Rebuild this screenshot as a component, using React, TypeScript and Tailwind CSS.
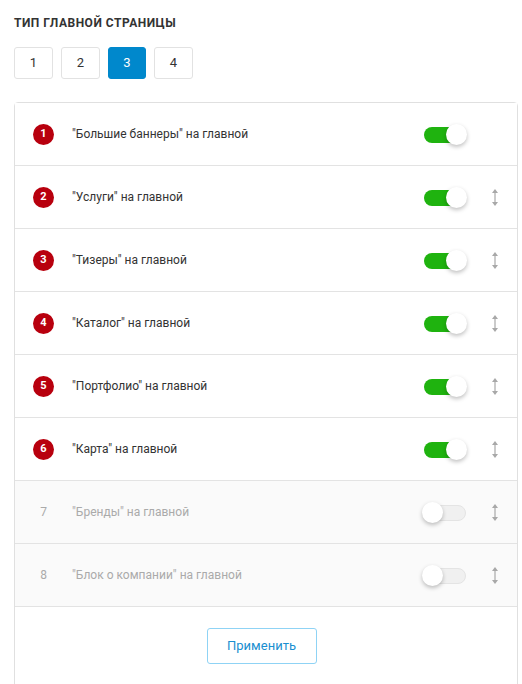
import { useState } from "react";

type Block = { id: number; title: string; on: boolean; drag: boolean };

const initialBlocks: Block[] = [
  { id: 1, title: "\"Большие баннеры\" на главной", on: true, drag: false },
  { id: 2, title: "\"Услуги\" на главной", on: true, drag: true },
  { id: 3, title: "\"Тизеры\" на главной", on: true, drag: true },
  { id: 4, title: "\"Каталог\" на главной", on: true, drag: true },
  { id: 5, title: "\"Портфолио\" на главной", on: true, drag: true },
  { id: 6, title: "\"Карта\" на главной", on: true, drag: true },
  { id: 7, title: "\"Бренды\" на главной", on: false, drag: true },
  { id: 8, title: "\"Блок о компании\" на главной", on: false, drag: true },
];

function Toggle({ on, onClick }: { on: boolean; onClick: () => void }) {
  return (
    <button type="button" onClick={onClick} className="relative h-[21px] w-[45px] shrink-0">
      <span
        className={
          on
            ? "absolute left-[2px] top-[3px] h-[16px] w-[40px] rounded-full bg-[#1fb30f]"
            : "absolute left-[4px] top-[3px] h-[16px] w-[40px] rounded-full border border-[#e4e4e4] bg-[#f0f0f0]"
        }
      />
      <span
        className={
          on
            ? "absolute right-0 top-0 h-[21px] w-[21px] rounded-full bg-white shadow-[0_2px_4px_rgba(0,0,0,0.25)]"
            : "absolute left-0 top-0 h-[21px] w-[21px] rounded-full bg-white shadow-[0_2px_4px_rgba(0,0,0,0.25)]"
        }
      />
    </button>
  );
}

function DragIcon() {
  return (
    <svg width="8" height="19" viewBox="0 0 8 19" className="shrink-0">
      <path d="M4 3v13" stroke="#a8a8a8" strokeWidth="1.2" />
      <path d="M1 5l3-4 3 4z" fill="#a8a8a8" />
      <path d="M1 14l3 4 3-4z" fill="#a8a8a8" />
    </svg>
  );
}

export default function App() {
  const [type, setType] = useState(3);
  const [blocks, setBlocks] = useState(initialBlocks);

  const toggle = (id: number) =>
    setBlocks((prev) => prev.map((b) => (b.id === id ? { ...b, on: !b.on } : b)));

  return (
    <div className="h-[684px] overflow-hidden bg-white pl-[14px] pr-[4px] pt-[15px] font-['Roboto',sans-serif]">
      <h2 className="text-[12px] font-bold uppercase leading-[16px] tracking-[0.5px] text-[#333]">
        Тип главной страницы
      </h2>

      <div className="mt-[16px] flex gap-[8px]">
        {[1, 2, 3, 4].map((n) => (
          <button
            key={n}
            type="button"
            onClick={() => setType(n)}
            className={
              n === type
                ? "h-[32px] w-[38px] rounded-[3px] border border-[#0088cc] bg-[#0088cc] text-[13px] text-white"
                : "h-[32px] w-[39px] rounded-[3px] border border-[#e2e2e2] bg-white text-[13px] text-[#333]"
            }
          >
            {n}
          </button>
        ))}
      </div>

      <div className="mt-[23px] rounded-[4px] border border-[#e0e0e0]">
        {blocks.map((b) => (
          <div
            key={b.id}
            className={
              b.on
                ? "flex h-[63px] items-center border-b border-[#e3e3e3] bg-white pl-[18px] pr-[18px]"
                : "flex h-[63px] items-center border-b border-[#e3e3e3] bg-[#fafafa] pl-[18px] pr-[18px]"
            }
          >
            {b.on ? (
              <span className="flex h-[21px] w-[21px] shrink-0 items-center justify-center rounded-full bg-[#b8000e] text-[11px] font-bold text-white">
                {b.id}
              </span>
            ) : (
              <span className="flex h-[21px] w-[21px] shrink-0 items-center justify-center text-[12px] text-[#aaa]">
                {b.id}
              </span>
            )}
            <span
              className={
                b.on
                  ? "ml-[18px] flex-1 text-[12px] text-[#333]"
                  : "ml-[18px] flex-1 text-[12px] text-[#aaa]"
              }
            >
              {b.title}
            </span>
            <Toggle on={b.on} onClick={() => toggle(b.id)} />
            <span className="flex w-[32px] justify-end">
              {b.drag ? <DragIcon /> : null}
            </span>
          </div>
        ))}
        <div className="flex justify-center pb-[30px] pr-[9px] pt-[21px]">
          <button
            type="button"
            className="h-[36px] w-[110px] rounded-[3px] border border-[#8fd3f5] bg-white text-[13px] text-[#1a8fd0]"
          >
            Применить
          </button>
        </div>
      </div>
    </div>
  );
}
